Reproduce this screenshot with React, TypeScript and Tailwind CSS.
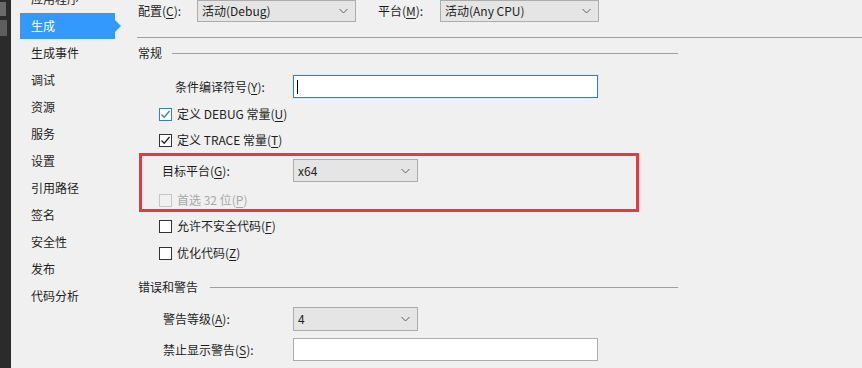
import React from "react";

const font = { fontFamily: '"Noto Sans CJK SC", "Noto Sans", sans-serif' };

function U({ c }: { c: string }) {
  return <span className="underline underline-offset-2">{c}</span>;
}

function Chevron() {
  return (
    <svg width="9" height="6" viewBox="0 0 9 6" className="shrink-0">
      <path d="M0.5 1 L4.5 5 L8.5 1" fill="none" stroke="#606060" strokeWidth="1" />
    </svg>
  );
}

function Combo({ w, text, h = 23 }: { w: string; text: string; h?: number }) {
  return (
    <div
      className={`${w} flex items-center justify-between bg-[#e5e5e5] border border-[#acacac] pl-[4px] pr-[7px] text-[#1e1e1e]`}
      style={{ height: h }}
    >
      <span>{text}</span>
      <Chevron />
    </div>
  );
}

function Check({ checked, blue, disabled }: { checked?: boolean; blue?: boolean; disabled?: boolean }) {
  const border = disabled ? "border-[#c6c6c6] bg-[#f0f0f0]" : blue ? "border-[#3c7fb1] bg-white" : "border-[#333333] bg-white";
  return (
    <div className={`w-[13px] h-[13px] border ${border} flex items-center justify-center shrink-0`}>
      {checked && (
        <svg width="11" height="11" viewBox="0 0 11 11">
          <path d="M1.5 5.5 L4.2 8.2 L9.5 2" fill="none" stroke={blue ? "#3c7fb1" : "#222"} strokeWidth="1.3" />
        </svg>
      )}
    </div>
  );
}

function CheckRow({ label, checked, blue, disabled, className = "" }: { label: React.ReactNode; checked?: boolean; blue?: boolean; disabled?: boolean; className?: string }) {
  return (
    <div className={`h-[18px] flex items-center ${className}`}>
      <Check checked={checked} blue={blue} disabled={disabled} />
      <span className={`ml-[5px] ${disabled ? "text-[#a8a8a8]" : "text-[#1e1e1e]"}`}>{label}</span>
    </div>
  );
}

const items = ["应用程序", "生成", "生成事件", "调试", "资源", "服务", "设置", "引用路径", "签名", "安全性", "发布", "代码分析"];

export default function App() {
  return (
    <div className="w-[862px] h-[368px] flex bg-[#f0f0f0] overflow-hidden text-[12px] leading-none text-[#1e1e1e]" style={font}>
      <div className="w-[11px] shrink-0 bg-[#2b2b2b] flex flex-col gap-[4px] pt-[2px]">
        <div className="w-[6px] h-[14px] bg-[#6a6a6a]" />
        <div className="w-[7px] h-[16px] bg-[#5e5e5e]" />
      </div>
      <div className="w-[110px] shrink-0 pl-[9px] mt-[-14px] flex flex-col">
        {items.map((it) => {
          const sel = it === "生成";
          return (
            <div key={it} className="h-[27px] flex items-start">
              <div className={`w-[96px] h-[26px] flex items-center pl-[11px] ${sel ? "bg-[#3399ff] text-white" : ""}`}>{it}</div>
              {sel && (
                <svg width="6" height="12" viewBox="0 0 6 12" className="mt-[7px]">
                  <path d="M0 0 L6 6 L0 12 Z" fill="#3399ff" />
                </svg>
              )}
            </div>
          );
        })}
      </div>
      <div className="flex-1 flex flex-col pl-[16px]">
        <div className="h-[22px] flex items-center">
          <span className="ml-[1px] w-[59px]">配置(<U c="C" />):</span>
          <Combo w="w-[159px]" text="活动(Debug)" h={22} />
          <span className="ml-[22px] w-[62px]">平台(<U c="M" />):</span>
          <Combo w="w-[159px]" text="活动(Any CPU)" h={22} />
        </div>
        <div className="mt-[15px] h-px bg-[#a0a0a0]" />
        <div className="mt-[7px] h-[16px] w-[541px] flex items-center">
          <span className="ml-[1px]">常规</span>
          <div className="ml-[10px] flex-1 h-px bg-[#a0a0a0]" />
        </div>
        <div className="mt-[14px] h-[23px] flex items-center">
          <span className="ml-[38px] w-[118px]">条件编译符号(<U c="Y" />):</span>
          <div className="w-[305px] h-[23px] bg-white border border-[#3c7fb1] outline outline-1 outline-[#d9ebf9] flex items-center pl-[3px]">
            <div className="w-px h-[14px] bg-black" />
          </div>
        </div>
        <CheckRow className="mt-[7px] ml-[22px]" checked blue label={<>定义 DEBUG 常量(<U c="U" />)</>} />
        <CheckRow className="mt-[8px] ml-[22px]" checked label={<>定义 TRACE 常量(<U c="T" />)</>} />
        <div className="mt-[4px] ml-[2px] w-[500px] h-[59px] border-[3px] border-[#e63b3b] flex flex-col">
          <div className="mt-[3px] h-[23px] flex items-center">
            <span className="ml-[20px] w-[131px]">目标平台(<U c="G" />):</span>
            <Combo w="w-[125px]" text="x64" />
          </div>
          <CheckRow className="mt-[9px] ml-[17px]" disabled label={<>首选 32 位(<U c="P" />)</>} />
        </div>
        <CheckRow className="mt-[5px] ml-[22px]" label={<>允许不安全代码(<U c="F" />)</>} />
        <CheckRow className="mt-[9px] ml-[22px]" label={<>优化代码(<U c="Z" />)</>} />
        <div className="mt-[17px] h-[16px] w-[541px] flex items-center">
          <span className="ml-[1px]">错误和警告</span>
          <div className="ml-[12px] flex-1 h-px bg-[#a0a0a0]" />
        </div>
        <div className="mt-[12px] h-[24px] flex items-center">
          <span className="ml-[26px] w-[130px]">警告等级(<U c="A" />):</span>
          <Combo w="w-[125px]" text="4" h={24} />
        </div>
        <div className="mt-[7px] h-[23px] flex items-center">
          <span className="ml-[26px] w-[130px]">禁止显示警告(<U c="S" />):</span>
          <div className="w-[305px] h-[23px] bg-white border border-[#acacac]" />
        </div>
      </div>
    </div>
  );
}
